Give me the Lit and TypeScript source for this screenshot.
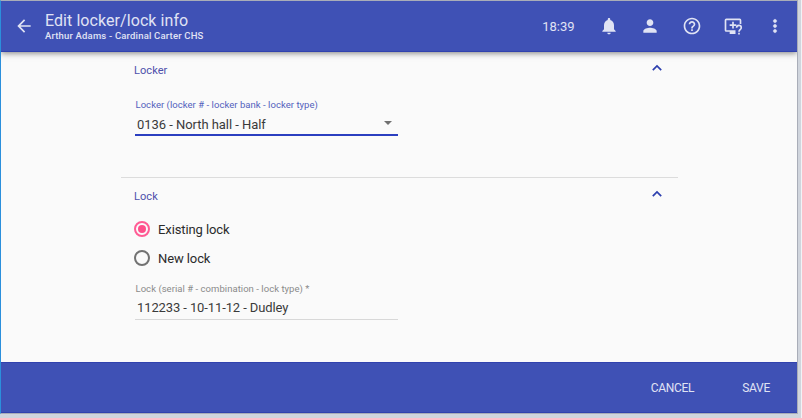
import { LitElement, html, css, svg } from "lit";
import { customElement, property } from "lit/decorators.js";

const chevron = html`<svg class="chev" viewBox="0 0 12 8"><path d="M1.8 6.2 6 2 10.2 6.2" fill="none" stroke="currentColor" stroke-width="1.7"/></svg>`;

const icons = {
  back: svg`<path d="M20 11H7.83l5.59-5.59L12 4l-8 8 8 8 1.41-1.41L7.83 13H20v-2z"/>`,
  bell: svg`<path d="M12 22c1.1 0 2-.9 2-2h-4c0 1.1.9 2 2 2zm6-6v-5c0-3.07-1.63-5.64-4.5-6.32V4c0-.83-.67-1.5-1.5-1.5s-1.5.67-1.5 1.5v.68C7.64 5.36 6 7.92 6 11v5l-2 2v1h16v-1l-2-2z"/>`,
  person: svg`<path d="M12 12c2.21 0 4-1.79 4-4s-1.79-4-4-4-4 1.79-4 4 1.79 4 4 4zm0 2c-2.67 0-8 1.34-8 4v2h16v-2c0-2.66-5.33-4-8-4z"/>`,
  help: svg`<path d="M11 18h2v-2h-2v2zm1-16C6.48 2 2 6.48 2 12s4.48 10 10 10 10-4.48 10-10S17.52 2 12 2zm0 18c-4.41 0-8-3.59-8-8s3.59-8 8-8 8 3.59 8 8-3.59 8-8 8zm0-14c-2.21 0-4 1.79-4 4h2c0-1.1.9-2 2-2s2 .9 2 2c0 2-3 1.75-3 5h2c0-2.25 3-2.5 3-5 0-2.21-1.79-4-4-4z"/>`,
  remote: svg`<path d="M22 9.500V5a2 2 0 0 0-2-2H4a2 2 0 0 0-2 2v12a2 2 0 0 0 2 2h4v2.500h7V17H4V5h16v4.500z"/><path d="M11 7h2v3h3v2h-3v3h-2v-3H8v-2h3z"/><path d="M16.300 14.200c0-1.800 1.200-2.900 2.800-2.900s2.800 1.100 2.800 2.700c0 2.400-2.700 2.400-2.700 4.800M19.200 20v2.300" fill="none" stroke="currentColor" stroke-width="2"/>`,
  more: svg`<path d="M12 8c1.1 0 2-.9 2-2s-.9-2-2-2-2 .9-2 2 .9 2 2 2zm0 2c-1.1 0-2 .9-2 2s.9 2 2 2 2-.9 2-2-.9-2-2-2zm0 6c-1.1 0-2 .9-2 2s.9 2 2 2 2-.9 2-2-.9-2-2-2z" stroke="currentColor" stroke-width=".5"/>`,
};

@customElement("app-icon")
class AppIcon extends LitElement {
  @property() name: keyof typeof icons = "back";
  static styles = css`
    :host { display: block; width: 20px; height: 20px; }
    svg { display: block; width: 100%; height: 100%; fill: currentColor; }
  `;
  render() {
    return html`<svg viewBox="0 0 24 24">${icons[this.name]}</svg>`;
  }
}

@customElement("app-root")
class AppRoot extends LitElement {
  static styles = css`
    :host {
      display: flex; box-sizing: border-box; width: 802px; height: 418px;
      background: #d0d5dd; padding: 0 3px 4px 0; overflow: hidden;
      font-family: Roboto, sans-serif; color: #3a3a3a;
      border-right: 1px solid #f1f3f6;
    }
    .window {
      flex: 1; display: flex; flex-direction: column; box-sizing: border-box;
      border: 1px solid #a9adb8; border-left-color: #2b8fdc; background: #fafafa;
    }
    header {
      height: 51px; box-sizing: border-box; flex: none; display: flex; align-items: center;
      background: #3f51b5; color: #e0e3f4; border-bottom: 1px solid #3142ae;
      box-shadow: 0 1px 6px rgba(0, 0, 0, 0.5); padding: 0 12px 0 13px;
      clip-path: inset(0 0 -12px 0);
    }
    .titles { margin-left: 11px; flex: 1; white-space: nowrap; }
    .title { font-size: 16px; line-height: 20px; letter-spacing: 0.07px; }
    .sub { font-size: 9.500px; line-height: 10px; font-weight: 500; letter-spacing: 0.18px; }
    .time { font-size: 13px; margin-right: 24px; }
    .tools { display: flex; gap: 21.600px; }
    main { flex: 1; padding: 0 119px 0 120px; }
    section { box-sizing: border-box; padding: 0 14px 0 13px; }
    .locker { height: 126px; border-bottom: 1px solid #dcdcdc; }
    .heading { display: flex; justify-content: space-between; align-items: flex-start; color: #4d50ab; font-size: 11px; line-height: 14px; padding-top: 12px; letter-spacing: 0.07px; }
    .chev { width: 12px; height: 8px; color: #2d3fae; margin-right: 1px; }
    .field { width: 263px; box-sizing: border-box; margin-left: 1px; border-bottom: 1px solid #d8d8d8; }
    .label { font-size: 9.500px; line-height: 12px; color: #8a8a8a; letter-spacing: 0.04px; padding-left: 0.500px; }
    .value { display: flex; justify-content: space-between; align-items: center; font-size: 13px; line-height: 16px; padding: 5px 6px 3px 2px; letter-spacing: -0.11px; }
    .active { margin-top: 21px; border-bottom: 2px solid #2b3fc0; }
    .active .label { color: #5261bd; }
    .active .value { padding: 6px 6px 1px 2px; letter-spacing: -0.05px; }
    .arrow { border: 4px solid transparent; border-top-color: #707070; border-bottom: 0; margin-top: -4px; }
    .radio { display: flex; align-items: center; height: 16px; gap: 8px; font-size: 13px; color: #2b2b2b; letter-spacing: -0.1px; line-height: 16px; }
    .radio span:last-child { padding-top: 2px; }
    .dot { width: 16px; height: 16px; box-sizing: border-box; border: 2px solid #727272; border-radius: 50%; display: grid; place-items: center; }
    .on .dot { border-color: #ff5c95; }
    .on .dot::after { content: ""; width: 8px; height: 8px; border-radius: 50%; background: #ff4f8b; }
    .on { margin-top: 17px; margin-bottom: 13px; }
    .lock { margin-top: 17px; }
    footer {
      height: 51px; box-sizing: border-box; flex: none; background: #3f51b5; color: #e0e3f4;
      border: solid #3142ae; border-width: 1px 0; display: flex; justify-content: flex-end;
      align-items: center; gap: 48px; padding-right: 27px; font-size: 12px; letter-spacing: -0.3px;
    }
  `;
  render() {
    return html`
      <div class="window">
        <header>
          <app-icon name="back"></app-icon>
          <div class="titles">
            <div class="title">Edit locker/lock info</div>
            <div class="sub">Arthur Adams - Cardinal Carter CHS</div>
          </div>
          <div class="time">18:39</div>
          <div class="tools">
            ${["bell", "person", "help", "remote", "more"].map((n) => html`<app-icon name=${n}></app-icon>`)}
          </div>
        </header>
        <main>
          <section class="locker">
            <div class="heading"><span>Locker</span>${chevron}</div>
            <div class="field active">
              <div class="label">Locker (locker # - locker bank - locker type)</div>
              <div class="value"><span>0136 - North hall - Half</span><i class="arrow"></i></div>
            </div>
          </section>
          <section>
            <div class="heading"><span>Lock</span>${chevron}</div>
            <div class="radio on"><span class="dot"></span><span>Existing lock</span></div>
            <div class="radio"><span class="dot"></span><span>New lock</span></div>
            <div class="field lock">
              <div class="label">Lock (serial # - combination - lock type) *</div>
              <div class="value"><span>112233 - 10-11-12 - Dudley</span></div>
            </div>
          </section>
        </main>
        <footer><span>CANCEL</span><span>SAVE</span></footer>
      </div>
    `;
  }
}
